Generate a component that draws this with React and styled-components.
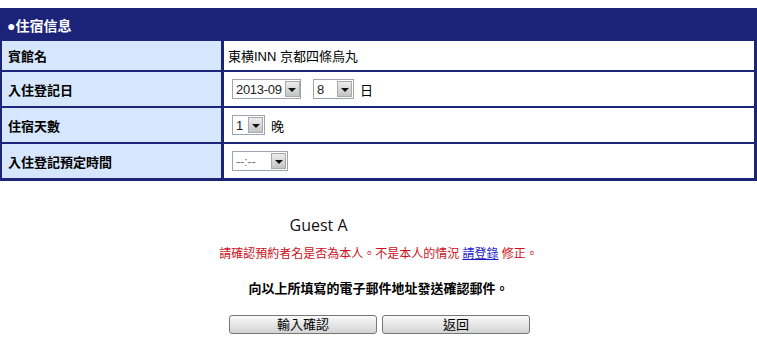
import React from 'react';
import styled, { createGlobalStyle } from 'styled-components';

const GlobalStyle = createGlobalStyle`
    body {
        margin: 0;
        background: #fff;
        font-family: "Liberation Sans", "Noto Sans CJK TC", sans-serif;
        color: #000;
    }
`;

const Page = styled.div`
    padding-top: 8px;
    width: 757px;
`;

const Panel = styled.div`
    background: #1c2479;
    padding: 0 3px 3px 2px;
`;

const PanelTitle = styled.div`
    height: 33px;
    display: flex;
    align-items: center;
    padding-left: 5px;
    color: #fff;
    font-weight: bold;
    font-size: 14px;
    font-family: "Liberation Sans", "Noto Sans CJK TC", sans-serif;
`;

const Rows = styled.div`
    display: grid;
    grid-template-columns: 219px 1fr;
    grid-template-rows: 29px 34px 34px 34px;
    column-gap: 3px;
    row-gap: 2px;
`;

const Label = styled.div`
    background: #d6e6fc;
    display: flex;
    align-items: center;
    padding-left: 6px;
    font-size: 13px;
    font-weight: bold;
`;

const Value = styled.div`
    background: #fff;
    display: flex;
    align-items: center;
    gap: 6px;
    padding-left: 4px;
    font-size: 13px;
`;

const SelectBox = styled.div`
    margin-left: ${p => p.$first ? '4px' : '6px'};
    width: ${p => p.$width}px;
    height: 20px;
    flex-shrink: 0;
    box-sizing: border-box;
    border: 1px solid #9aa4b3;
    background: #fff;
    display: flex;
    align-items: center;
    justify-content: space-between;
    gap: 3px;
    padding: 1px;
    font-size: 13px;
    white-space: nowrap;
    color: ${p => p.$muted ? '#777' : '#222'};
`;

const SelectText = styled.span`
    padding-left: 2px;
    letter-spacing: -0.3px;
    font-family: "Liberation Sans", sans-serif;
`;

const Arrow = styled.span`
    width: 15px;
    height: 16px;
    flex-shrink: 0;
    box-sizing: border-box;
    border: 1px solid #a9a9a9;
    background: linear-gradient(#ececec, #c4c4c4);
    display: flex;
    align-items: center;
    justify-content: center;

    &::after {
        content: '';
        border-left: 4px solid transparent;
        border-right: 4px solid transparent;
        border-top: 4px solid #111;
        margin-top: 1px;
    }
`;

const Select = ({ value, width, first, muted }) => (
    <SelectBox $width={width} $first={first} $muted={muted}>
        <SelectText>{value}</SelectText>
        <Arrow />
    </SelectBox>
);

const Confirm = styled.div`
    display: flex;
    flex-direction: column;
    align-items: center;
    margin-top: 34px;
`;

const GuestName = styled.div`
    width: 300px;
    padding-left: 61px;
    box-sizing: border-box;
    font-family: "Open Sans", sans-serif;
    font-size: 16px;
    line-height: 20px;
    color: #111;
`;

const Notice = styled.p`
    margin: 11px 0 0;
    font-size: 12px;
    line-height: 16px;
    color: #cc1122;

    a {
        color: #1a1acc;
        text-decoration: underline;
    }
`;

const MailNote = styled.p`
    margin: 18px 0 0;
    font-size: 13px;
    font-weight: bold;
    line-height: 18px;
`;

const Buttons = styled.div`
    display: flex;
    gap: 5px;
    margin-top: 17px;
    padding-left: 2px;
`;

const Button = styled.button`
    width: 148px;
    height: 19px;
    padding: 0;
    border: 1px solid #777;
    border-radius: 3px;
    background: linear-gradient(#fafafa, #e6e6e6 50%, #d4d4d4);
    font-family: "Liberation Sans", "Noto Sans CJK TC", sans-serif;
    font-size: 13px;
    line-height: 17px;
    color: #000;
`;

export default function App() {
    return (
        <Page>
            <GlobalStyle />
            <Panel>
                <PanelTitle>●住宿信息</PanelTitle>
                <Rows>
                    <Label>賓館名</Label>
                    <Value>東横INN 京都四條烏丸</Value>

                    <Label>入住登記日</Label>
                    <Value>
                        <Select value="2013-09" width={69} first />
                        <Select value="8" width={41} />
                        <span>日</span>
                    </Value>

                    <Label>住宿天數</Label>
                    <Value>
                        <Select value="1" width={33} first />
                        <span>晚</span>
                    </Value>

                    <Label>入住登記預定時間</Label>
                    <Value>
                        <Select value="--:--" width={56} first muted />
                    </Value>
                </Rows>
            </Panel>

            <Confirm>
                <GuestName>Guest A</GuestName>
                <Notice>
                    請確認預約者名是否為本人。不是本人的情況 <a href="#">請登錄</a> 修正。
                </Notice>
                <MailNote>向以上所填寫的電子郵件地址發送確認郵件。</MailNote>
                <Buttons>
                    <Button>輸入確認</Button>
                    <Button>返回</Button>
                </Buttons>
            </Confirm>
        </Page>
    );
}
